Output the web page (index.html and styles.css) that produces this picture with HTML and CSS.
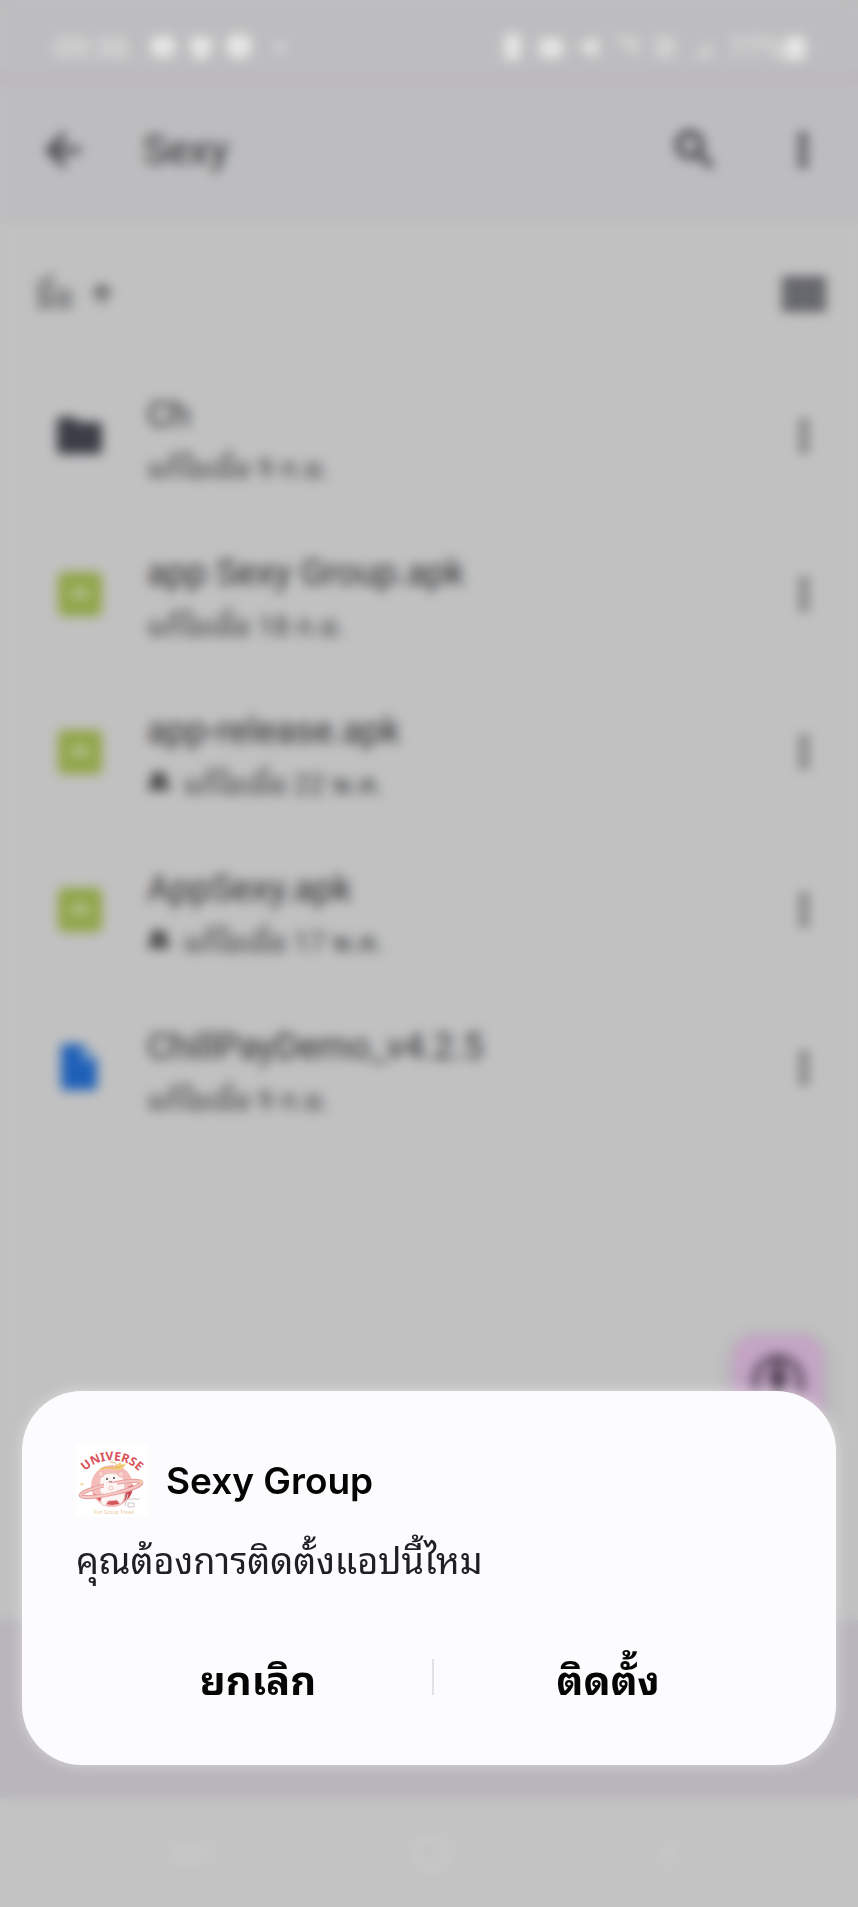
FILE: index.html
```html
<!DOCTYPE html>
<html lang="th">
<head>
<meta charset="utf-8">
<meta name="viewport" content="width=device-width, initial-scale=1">
<title>Sexy Group</title>
<link rel="stylesheet" href="styles.css">
</head>
<body>
<svg class="defs" aria-hidden="true">
  <symbol id="more" viewBox="0 0 24 24"><path d="M12 8a2 2 0 1 0 0-4 2 2 0 0 0 0 4zm0 2a2 2 0 1 0 0 4 2 2 0 0 0 0-4zm0 6a2 2 0 1 0 0 4 2 2 0 0 0 0-4z" stroke="currentColor"/></symbol>
  <symbol id="apk" viewBox="0 0 44 44"><rect width="44" height="44" rx="5" fill="#8fa547"/><path d="M11 27a11 11 0 0 1 22 0z" fill="#b1bd8c"/><path d="M15 12l4 6M29 12l-4 6" stroke="#b1bd8c" stroke-width="2"/></symbol>
  <symbol id="people" viewBox="0 0 24 24"><circle cx="9" cy="8" r="5"/><circle cx="16" cy="8" r="4"/><path d="M1 21v-3c0-3 4-5 8-5h6c4 0 8 2 8 5v3z"/></symbol>
</svg>
<div class="screen">
  <div class="app">
    <div class="status">
      <div class="status-left">
        <span class="clock">09:36</span>
        <svg viewBox="0 0 24 24"><rect x="1" y="2" width="22" height="19" rx="5"/></svg>
        <svg viewBox="0 0 24 24"><path d="M2 3h20v11l-7 10H9L2 14z"/></svg>
        <svg viewBox="0 0 24 24"><circle cx="12" cy="11" r="12"/></svg>
        <span class="dot"></span>
      </div>
      <div class="status-right">
        <svg viewBox="0 0 24 24"><rect x="4" width="15" height="24" rx="3"/></svg>
        <svg viewBox="0 0 24 24"><rect x="1" y="4" width="22" height="18" rx="5"/></svg>
        <svg viewBox="0 0 24 24"><path d="M1 12L20 2v20z"/></svg>
        <svg class="faint" viewBox="0 0 24 24"><path d="M0 4c8-5 18-2 24 3l-3 14z"/></svg>
        <svg class="faint" viewBox="0 0 24 24"><rect x="3" y="2" width="18" height="20"/></svg>
        <svg class="faint" viewBox="0 0 24 24"><path d="M2 22L20 6v16z"/></svg>
        <span class="level">77%</span>
        <svg viewBox="0 0 24 24"><rect x="2" y="2" width="20" height="22" rx="5"/></svg>
      </div>
    </div>
    <div class="status-edge"></div>
    <header class="appbar">
      <button class="icon-btn" aria-label="กลับ"><svg viewBox="0 0 24 24"><path d="M20 11H7.800l5.600-5.600L12 4l-8 8 8 8 1.400-1.400L7.800 13H20z" stroke="currentColor"/></svg></button>
      <h1 class="folder-title">Sexy</h1>
      <button class="icon-btn" aria-label="ค้นหา"><svg viewBox="0 0 24 24"><path d="M15.500 14h-.8l-.3-.3a6.500 6.500 0 1 0-.7.7l.3.300v.8l5 5 1.500-1.500zm-6 0a4.500 4.500 0 1 1 0-9 4.500 4.500 0 0 1 0 9z" stroke="currentColor"/></svg></button>
      <button class="icon-btn" aria-label="ตัวเลือก"><svg viewBox="0 0 24 24"><use href="#more"/></svg></button>
    </header>
    <div class="sortbar">
      <button class="sort">ชื่อ <svg viewBox="0 0 24 24"><path d="M4 12l1.400 1.400L11 7.800V20h2V7.800l5.600 5.600L20 12l-8-8z"/></svg></button>
      <button class="view" aria-label="มุมมองรายการ"><svg viewBox="0 0 44 34"><path d="M0 0h44v10H0zM0 12h44v10H0zM0 24h44v10H0z"/></svg></button>
    </div>
    <ul class="files">
      <li class="file">
        <svg class="type" viewBox="0 0 48 48"><path d="M1 9a4 4 0 0 1 4-4h13l5 5h19a4 4 0 0 1 4 4v24a4 4 0 0 1-4 4H5a4 4 0 0 1-4-4z" fill="#3b3e46"/></svg>
        <div class="info"><div class="name">Ch</div><div class="meta">แก้ไขเมื่อ 9 ก.ย.</div></div>
        <button class="more" aria-label="เพิ่มเติม"><svg viewBox="0 0 24 24"><use href="#more"/></svg></button>
      </li>
      <li class="file">
        <svg class="type" viewBox="-2 -2 48 48"><use href="#apk" width="44" height="44"/></svg>
        <div class="info"><div class="name">app Sexy Group.apk</div><div class="meta">แก้ไขเมื่อ 18 ก.ย.</div></div>
        <button class="more" aria-label="เพิ่มเติม"><svg viewBox="0 0 24 24"><use href="#more"/></svg></button>
      </li>
      <li class="file">
        <svg class="type" viewBox="-2 -2 48 48"><use href="#apk" width="44" height="44"/></svg>
        <div class="info"><div class="name">app-release.apk</div><div class="meta"><svg viewBox="0 0 24 24"><use href="#people"/></svg>แก้ไขเมื่อ 22 พ.ค.</div></div>
        <button class="more" aria-label="เพิ่มเติม"><svg viewBox="0 0 24 24"><use href="#more"/></svg></button>
      </li>
      <li class="file">
        <svg class="type" viewBox="-2 -2 48 48"><use href="#apk" width="44" height="44"/></svg>
        <div class="info"><div class="name">AppSexy.apk</div><div class="meta"><svg viewBox="0 0 24 24"><use href="#people"/></svg>แก้ไขเมื่อ 17 พ.ค.</div></div>
        <button class="more" aria-label="เพิ่มเติม"><svg viewBox="0 0 24 24"><use href="#more"/></svg></button>
      </li>
      <li class="file">
        <svg class="type" viewBox="0 0 48 48"><path d="M5 4a4 4 0 0 1 4-4h17l15 15v27a4 4 0 0 1-4 4H9a4 4 0 0 1-4-4z" fill="#1e60b8"/><path d="M26 3v13h14z" fill="#8aa6c8"/></svg>
        <div class="info"><div class="name">ChillPayDemo_v4.2.5</div><div class="meta">แก้ไขเมื่อ 9 ก.ย.</div></div>
        <button class="more" aria-label="เพิ่มเติม"><svg viewBox="0 0 24 24"><use href="#more"/></svg></button>
      </li>
    </ul>
    <div class="fab-row">
      <button class="fab" aria-label="สแกน"><svg viewBox="0 0 54 54"><path d="M5 40V22C9 11 18 5 27 5s18 6 22 17v18" fill="none" stroke="#655469" stroke-width="8"/><circle cx="27" cy="26" r="9"/><path d="M23 6h8v38h-8z"/></svg></button>
    </div>
    <div class="tabs"></div>
    <nav class="sysnav">
      <svg viewBox="0 0 40 40"><path d="M6 8v24M20 8v24M34 8v24"/></svg>
      <svg viewBox="0 0 40 40"><rect x="6" y="6" width="28" height="28" rx="8"/></svg>
      <svg viewBox="0 0 40 40"><path d="M24 6L12 20l12 14"/></svg>
    </nav>
  </div>
  <div class="scrim">
    <section class="dialog" role="dialog" aria-labelledby="dialog-title">
      <div class="dialog-head">
        <svg class="logo" viewBox="0 0 72 72" role="img" aria-label="Universe">
          <rect width="72" height="72" fill="#fff"/>
          <path id="arc" d="M4 34C16 9 56 9 68 34" fill="none"/>
          <text class="logo-name"><textPath href="#arc" startOffset="50%" text-anchor="middle">UNIVERSE</textPath></text>
          <circle cx="36" cy="41" r="21" fill="#f5bcba"/>
          <path d="M17 48a21 21 0 0 0 38 0l-5-3-12 9-18-4z" fill="#d3565c"/>
          <path d="M52 42l5-2a21 21 0 0 1-6 15z" fill="#c9454d"/>
          <path d="M24 35c0-9 23-9 24 1 1 6 3 20-4 23l-3-4-9 1-3 5c-5-1-5-5-3-9-3-5-2-11-2-17z" fill="#fdf5f4" stroke="#e5c9c6"/>
          <circle cx="25" cy="29" r="3" fill="#f8d1cf" stroke="#f0b0ae"/><circle cx="45" cy="29" r="3" fill="#f8d1cf" stroke="#f0b0ae"/>
          <path d="M22 26c6-7 12-1 18-5l4-4 2 3 4-2c-2 8-9 8-15 6-5-1-9 1-13 2z" fill="#f4d17c"/>
          <path d="M25 24c8-4 15 2 22-4M34 17c5 0 6 1 7 5" fill="none" stroke="#e5b05a"/>
          <circle cx="31" cy="34" r="1" fill="#444"/><circle cx="38" cy="33" r="1" fill="#444"/><path d="M33 36q2 2 3 0" fill="none" stroke="#777"/>
          <ellipse cx="35" cy="44" rx="31" ry="5" transform="rotate(-12 35 44)" fill="none" stroke="#e9a09f" stroke-width="4"/>
          <ellipse cx="35" cy="44" rx="31" ry="5" transform="rotate(-12 35 44)" fill="none" stroke="#f6c9c6" stroke-width="2"/>
          <path d="M28 38h13v8l-13 3z" fill="#fdf5f4"/>
          <circle cx="35" cy="43" r="2" fill="none" stroke="#efc1bd"/>
          <path d="M49 61l3-12M52 58h6v4h-6zM52 54c3 1 6-1 8 0s3 0 4-1" fill="none" stroke="#cdc5ca"/>
          <path d="M6 38v3M4 39h4M65 35v3M63 36h4" stroke="#f0d795"/>
          <text class="logo-tag" x="38" y="69" text-anchor="middle">Fun Group Travel</text>
        </svg>
        <h2 class="dialog-title" id="dialog-title">Sexy Group</h2>
      </div>
      <p class="question">คุณต้องการติดตั้งแอปนี้ไหม</p>
      <div class="actions">
        <button class="action">ยกเลิก</button>
        <span class="divider"></span>
        <button class="action">ติดตั้ง</button>
      </div>
    </section>
  </div>
</div>
</body>
</html>
```
FILE: styles.css
```css
* { box-sizing: border-box; }
body {
  margin: 0;
  background: #c1c1c1;
  font-family: Roboto, "Noto Sans Thai Looped", "Noto Looped Thai", Loma, Waree, Garuda, "Noto Sans Thai", "Noto Sans", sans-serif;
  color: #48484a;
}
button { border: 0; padding: 0; background: none; color: inherit; font: inherit; }
h1, h2, p, ul { margin: 0; padding: 0; }
svg { display: block; fill: currentColor; flex: none; }
.defs { position: absolute; width: 0; height: 0; }
.screen { position: relative; min-height: 100vh; display: flex; }
.app { flex: 1; display: flex; flex-direction: column; min-width: 0; }

.status {
  height: 70px;
  padding: 24px 50px 0 54px;
  display: flex;
  align-items: center;
  justify-content: space-between;
  background: #bdbdbf;
  color: #e6e6e6;
  font-size: 30px;
}
.status-edge { height: 16px; background: #bcb9bc; }
.status-left, .status-right { display: flex; align-items: center; gap: 12px; }
.status svg { width: 26px; height: 26px; }
.status .faint { opacity: 0.5; }
.clock { width: 82px; margin-right: 2px; }
.level { width: 60px; margin-right: -18px; }
.dot { width: 8px; height: 8px; margin-left: 12px; border-radius: 50%; background: #e6e0e6; }

.appbar {
  height: 138px;
  padding: 0 30px 10px 38px;
  display: flex;
  align-items: center;
  background: #bdbdbf;
}
.icon-btn svg { width: 50px; height: 50px; }
.icon-btn + .icon-btn { margin-left: 58px; }
.folder-title { flex: 1; padding-left: 55px; font-size: 41px; font-weight: 400; color: #303032; }

.sortbar {
  height: 133px;
  padding: 6px 32px 0 36px;
  display: flex;
  align-items: center;
  justify-content: space-between;
}
.sort { display: flex; align-items: center; gap: 14px; font-size: 33px; }
.sort svg { width: 28px; height: 28px; stroke: currentColor; }
.view svg { width: 44px; height: 34px; color: #55565c; }

.files { list-style: none; }
.file { height: 158px; padding: 0 30px 0 56px; display: flex; align-items: center; }
.type { width: 48px; height: 48px; }
.info { flex: 1; padding: 10px 0 0 43px; }
.name { font-size: 36px; line-height: 48px; color: #303032; }
.meta { height: 52px; display: flex; align-items: center; gap: 12px; font-size: 28px; color: #3c3c3e; }
.meta svg { width: 24px; height: 24px; }
.more svg { width: 48px; height: 48px; color: #6c6c6e; }

.fab-row { flex: 1; padding: 187px 34px 0; display: flex; justify-content: flex-end; align-items: flex-start; }
.fab {
  width: 92px;
  height: 92px;
  display: grid;
  place-items: center;
  border-radius: 24px;
  background: #c3a4c4;
  box-shadow: 0 6px 16px rgba(90, 90, 100, 0.25);
  color: #4a3b4e;
}
.fab svg { width: 54px; height: 54px; }
.tabs { height: 178px; background: #b8b5bc; }
.sysnav {
  height: 109px;
  padding-left: 4px;
  display: flex;
  align-items: center;
  justify-content: center;
  gap: 200px;
  background: #c3c3c3;
}
.sysnav svg { width: 40px; height: 40px; fill: none; stroke: #cbcbcb; stroke-width: 5px; }

.scrim {
  position: absolute;
  inset: 0;
  padding: 0 22px 142px;
  display: flex;
  align-items: flex-end;
  backdrop-filter: blur(6px);
}
.dialog {
  flex: 1;
  padding: 54px 54px 42px;
  border-radius: 60px;
  background: #fcfcfe;
  box-shadow: 0 0 14px rgba(240, 240, 240, 0.6);
}
.dialog-head { display: flex; align-items: center; gap: 18px; }
.logo { width: 72px; height: 72px; overflow: visible; }
.logo-name { font: 700 12px "Noto Sans", sans-serif; fill: #d85059; }
.logo-tag { font: 5px "Noto Sans", sans-serif; fill: #ecc9a0; }
.dialog-title { font: 600 37px/44px Inter, sans-serif; color: #050505; }
.question { padding-top: 16px; font-size: 36px; line-height: 58px; color: #202024; }
.actions { padding: 40px 0 0 8px; display: flex; align-items: center; }
.action { flex: 1; height: 92px; font-size: 40px; font-weight: 700; color: #050505; }
.divider { width: 2px; height: 36px; background: #e2e2e6; }
```
